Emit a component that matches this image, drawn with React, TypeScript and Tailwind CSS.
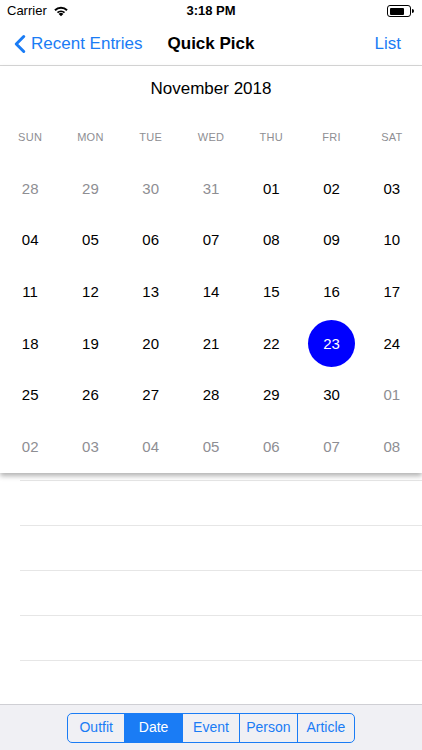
import { ChevronLeft } from 'lucide-react';

const font = { fontFamily: '"Liberation Sans", Arial, sans-serif' };

type Day = { n: string; muted?: boolean; selected?: boolean };

const pad = (n: number) => (n < 10 ? '0' + n : String(n));

function buildDays(): Day[] {
  const days: Day[] = [];
  [28, 29, 30, 31].forEach((n) => days.push({ n: pad(n), muted: true }));
  for (let i = 1; i <= 30; i++) days.push({ n: pad(i), selected: i === 23 });
  for (let i = 1; i <= 8; i++) days.push({ n: pad(i), muted: true });
  return days;
}

const weekdays = ['SUN', 'MON', 'TUE', 'WED', 'THU', 'FRI', 'SAT'];
const segments = ['Outfit', 'Date', 'Event', 'Person', 'Article'];

function StatusBar() {
  return (
    <div className="h-[22px] flex items-center justify-between px-[7px] text-[13px] text-black">
      <div className="flex items-center gap-[6px] w-[100px]">
        <span>Carrier</span>
        <svg width="16" height="12" viewBox="0 0 15 11">
          <path d="M7.5 10.5 L5.3 8.2 A3.2 3.2 0 0 1 9.7 8.2 Z" fill="#000" />
          <path d="M3.6 6.5 A5.6 5.6 0 0 1 11.4 6.5 L10.2 7.7 A3.9 3.9 0 0 0 4.8 7.7 Z" fill="#000" />
          <path d="M1.2 4.2 A8.9 8.9 0 0 1 13.8 4.2 L12.5 5.5 A7.1 7.1 0 0 0 2.5 5.5 Z" fill="#000" />
        </svg>
      </div>
      <span className="font-bold">3:18 PM</span>
      <div className="w-[100px] flex justify-end pr-[1px]">
        <div className="flex items-center">
          <div className="w-[24px] h-[12px] rounded-[3px] border border-black p-[1.5px]">
            <div className="h-full w-[14px] bg-black rounded-[1px]" />
          </div>
          <div className="w-[1.5px] h-[4px] bg-black ml-[1px] rounded-r" />
        </div>
      </div>
    </div>
  );
}

function NavBar() {
  return (
    <div className="h-[44px] flex items-center justify-between border-b border-[#d8d8d8] relative">
      <div className="flex items-center text-[#1a7cf5] pl-[5px]">
        <ChevronLeft size={30} strokeWidth={2.4} className="-mr-[4px]" />
        <span className="text-[17px]">Recent Entries</span>
      </div>
      <span className="absolute left-1/2 -translate-x-1/2 text-[17px] font-bold text-black">Quick Pick</span>
      <span className="text-[17px] text-[#1a7cf5] pr-[21px]">List</span>
    </div>
  );
}

function Calendar() {
  const days = buildDays();
  return (
    <div className="bg-white shadow-[0_3px_5px_rgba(0,0,0,0.3)] relative z-10">
      <div className="h-[46px] flex items-center justify-center text-[17px] text-black">November 2018</div>
      <div className="grid grid-cols-7 h-[51px] items-center">
        {weekdays.map((w) => (
          <div key={w} className="text-center text-[11px] text-[#8e8e93] tracking-wide">{w}</div>
        ))}
      </div>
      <div className="grid grid-cols-7">
        {days.map((d, i) => (
          <div key={i} className="h-[51.7px] flex items-center justify-center">
            {d.selected ? (
              <div className="w-[47px] h-[47px] rounded-full bg-[#0000ff] text-white flex items-center justify-center text-[15px]">
                {d.n}
              </div>
            ) : (
              <span className={d.muted ? 'text-[15px] text-[#8e8e93]' : 'text-[15px] text-black'}>{d.n}</span>
            )}
          </div>
        ))}
      </div>
    </div>
  );
}

function ListArea() {
  return (
    <div className="flex-1 flex flex-col">
      <div className="h-[8px] border-b border-[#e6e6e6] ml-[20px]" />
      {[0, 1, 2, 3].map((i) => (
        <div key={i} className="h-[45px] border-b border-[#e6e6e6] ml-[20px]" />
      ))}
      <div className="flex-1" />
    </div>
  );
}

function Toolbar() {
  return (
    <div className="h-[46px] bg-[#f0f0f4] border-t border-[#cfcfd4] flex items-center justify-center">
      <div className="flex h-[30px] w-[288px] border border-[#1a7cf5] rounded-[5px] overflow-hidden">
        {segments.map((s, i) => (
          <div
            key={s}
            className={
              (s === 'Date' ? 'bg-[#1a7cf5] text-white ' : 'text-[#1a7cf5] ') +
              (i > 0 ? 'border-l border-[#1a7cf5] ' : '') +
              'flex-1 flex items-center justify-center text-[14px]'
            }
          >
            {s}
          </div>
        ))}
      </div>
    </div>
  );
}

export default function App() {
  return (
    <div className="w-[422px] h-[750px] bg-white flex flex-col overflow-hidden" style={font}>
      <StatusBar />
      <NavBar />
      <Calendar />
      <ListArea />
      <Toolbar />
    </div>
  );
}
